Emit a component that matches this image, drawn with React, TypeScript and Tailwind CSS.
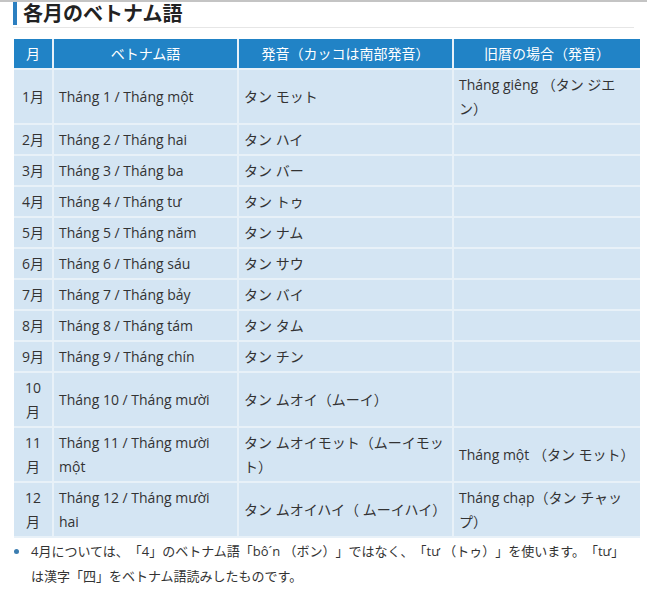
const rows: { m: string; vn: string; pron: string; old: string }[] = [
  { m: '1月', vn: 'Tháng 1 / Tháng một', pron: 'タン モット', old: 'Tháng giêng （タン ジエン）' },
  { m: '2月', vn: 'Tháng 2 / Tháng hai', pron: 'タン ハイ', old: '' },
  { m: '3月', vn: 'Tháng 3 / Tháng ba', pron: 'タン バー', old: '' },
  { m: '4月', vn: 'Tháng 4 / Tháng tư', pron: 'タン トゥ', old: '' },
  { m: '5月', vn: 'Tháng 5 / Tháng năm', pron: 'タン ナム', old: '' },
  { m: '6月', vn: 'Tháng 6 / Tháng sáu', pron: 'タン サウ', old: '' },
  { m: '7月', vn: 'Tháng 7 / Tháng bảy', pron: 'タン バイ', old: '' },
  { m: '8月', vn: 'Tháng 8 / Tháng tám', pron: 'タン タム', old: '' },
  { m: '9月', vn: 'Tháng 9 / Tháng chín', pron: 'タン チン', old: '' },
  { m: '10月', vn: 'Tháng 10 / Tháng mười', pron: 'タン ムオイ（ムーイ）', old: '' },
  { m: '11月', vn: 'Tháng 11 / Tháng mười một', pron: 'タン ムオイモット（ムーイモット）', old: 'Tháng một （タン モット）' },
  { m: '12月', vn: 'Tháng 12 / Tháng mười hai', pron: 'タン ムオイハイ（ ムーイハイ）', old: 'Tháng chạp（タン チャップ）' },
]

export default function App() {
  return (
    <div className="min-h-[595px] w-[647px] border-t-2 border-[#c4c4c4] bg-white font-['Open_Sans','Noto_Sans_CJK_JP',sans-serif] text-[#333]">
      {/* Heading */}
      <div className="mx-[13px] flex items-stretch border-b border-[#e6e6e6] pb-[2px]">
        <div className="w-[4px] bg-[#2c7fc0]" />
        <h2 className="pl-[6px] text-[20px] font-bold leading-[23px] text-[#222]">各月のベトナム語</h2>
      </div>

      {/* Table */}
      <table className="ml-[14px] mt-[11px] w-[626px] table-fixed border-collapse text-[14px] leading-[24px]">
        <colgroup>
          <col className="w-[39px]" />
          <col className="w-[185px]" />
          <col className="w-[215px]" />
          <col className="w-[187px]" />
        </colgroup>
        <thead>
          <tr className="bg-[#2183c6] text-white">
            <th className="h-[30px] border-x-2 border-x-[#e8f1f8] px-[6px] py-0 text-center font-normal first:border-l-0 last:border-r-0">月</th>
            <th className="h-[30px] border-x-2 border-x-[#e8f1f8] px-[6px] py-0 text-center font-normal">ベトナム語</th>
            <th className="h-[30px] border-x-2 border-x-[#e8f1f8] px-[6px] py-0 text-center font-normal">発音（カッコは南部発音）</th>
            <th className="h-[30px] border-x-2 border-x-[#e8f1f8] px-[6px] py-0 text-center font-normal last:border-r-0">旧暦の場合（発音）</th>
          </tr>
        </thead>
        <tbody>
          {rows.map((r) => (
            <tr key={r.m} className="bg-[#d4e5f3]">
              <td className="border-2 border-[#e8f1f8] border-l-0 px-[5px] pb-[2px] pt-[3px] text-center align-middle">{r.m}</td>
              <td className="border-2 border-[#e8f1f8] px-[5px] pb-[2px] pt-[3px] align-middle">{r.vn}</td>
              <td className="border-2 border-[#e8f1f8] px-[5px] pb-[2px] pt-[3px] align-middle">{r.pron}</td>
              <td className="border-2 border-[#e8f1f8] border-r-0 px-[5px] pb-[2px] pt-[3px] align-middle">{r.old}</td>
            </tr>
          ))}
        </tbody>
      </table>

      {/* Note */}
      <ul className="ml-[14px] mt-[1px] w-[620px] text-[13px] leading-[25px] [text-spacing-trim:space-all]">
        <li className="flex">
          <span className="mt-[10px] h-[5px] w-[5px] shrink-0 rounded-full bg-[#3b7db0]" />
          <span className="pl-[12px]">
            4月については、「4」のベトナム語「bô´n （ボン）」ではなく、「tư （トゥ）」を使います。「tư」は漢字「四」をベトナム語読みしたものです。
          </span>
        </li>
      </ul>
    </div>
  )
}
